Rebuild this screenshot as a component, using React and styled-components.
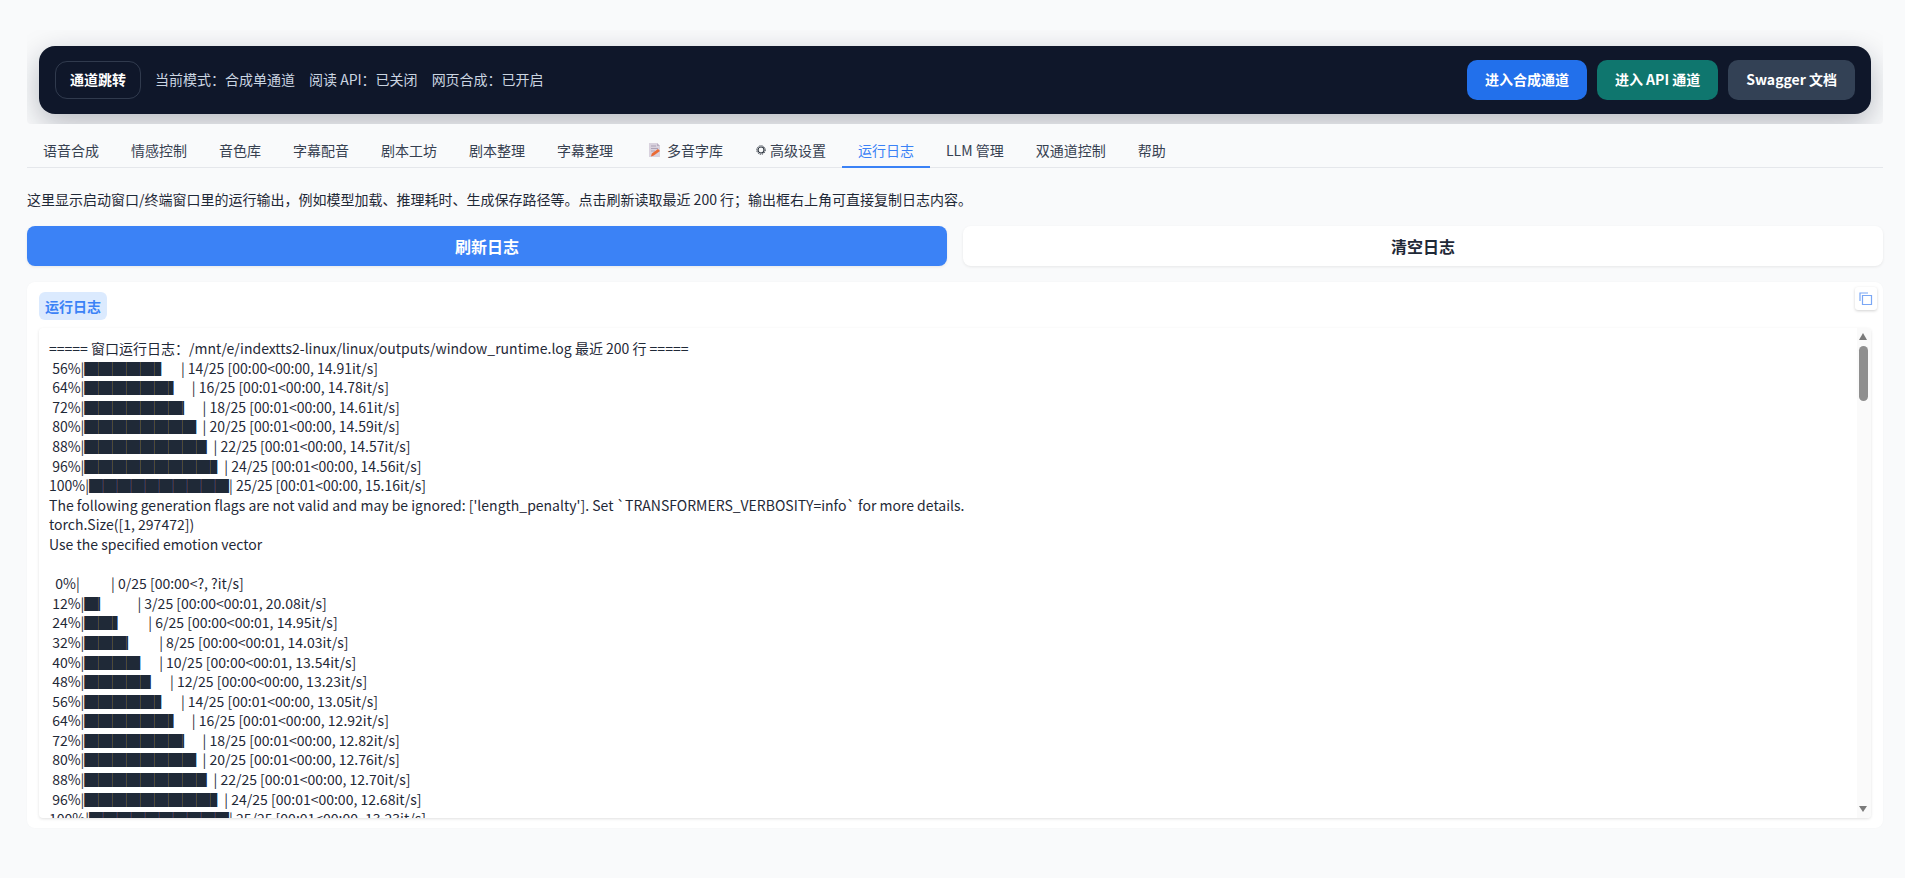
import React from 'react'
import styled, { createGlobalStyle } from 'styled-components'

const GlobalStyle = createGlobalStyle`
  html, body {
    margin: 0;
    height: 100%;
    background: #f9fafb;
    font-family: "Noto Sans CJK SC", "Noto Sans", sans-serif;
    color: #1f2937;
    overflow: hidden;
  }
  * {
    box-sizing: border-box;
  }
`

const Page = styled.div`
  padding: 30px 22px 0 27px;
`

const Band = styled.div`
  padding: 16px 12px 10px;
  overflow: hidden;
  border-radius: 4px;
`

const TopBar = styled.div`
  height: 68px;
  padding: 0 16px;
  display: flex;
  align-items: center;
  background: #0f172a;
  border-radius: 16px;
  box-shadow: 0 10px 30px rgba(15, 23, 42, 0.28);
`

const Badge = styled.div`
  height: 38px;
  width: 86px;
  padding-bottom: 2px;
  display: flex;
  align-items: center;
  justify-content: center;
  border: 1px solid rgba(148, 163, 184, 0.25);
  border-radius: 12px;
  color: #fff;
  font-size: 14px;
  font-weight: 700;
`

const Status = styled.div`
  margin-left: 14px;
  padding-bottom: 2px;
  display: flex;
  gap: 14px;
  color: #cbd5e1;
  font-size: 14px;
  flex: 1;
`

const LinkRow = styled.div`
  display: flex;
  gap: 10px;
`

const LinkBtn = styled.a`
  height: 40px;
  padding: 0 18px 2px;
  display: flex;
  align-items: center;
  border-radius: 10px;
  background: ${p => p.$bg};
  color: #fff;
  font-size: 14px;
  font-weight: 700;
  white-space: pre;
`

const TabBar = styled.div`
  margin-top: 9px;
  display: flex;
  border-bottom: 1px solid #e5e7eb;
`

const Tab = styled.div`
  height: 35px;
  margin-bottom: -1px;
  padding: 0 16px;
  display: flex;
  align-items: center;
  gap: ${p => p.$gap || 0}px;
  font-size: 14px;
  white-space: pre;
  color: ${p => (p.$active ? '#3b82f6' : '#374151')};
  border-bottom: 2px solid ${p => (p.$active ? '#3b82f6' : 'transparent')};
`

const Intro = styled.p`
  margin: 21px 0 0;
  font-size: 14px;
  line-height: 20px;
  color: #1f2937;
`

const ActionRow = styled.div`
  margin-top: 17px;
  display: grid;
  grid-template-columns: 1fr 1fr;
  gap: 16px;
`

const ActionBtn = styled.button`
  height: 40px;
  border: none;
  border-radius: 8px;
  font-family: inherit;
  font-size: 16px;
  font-weight: 700;
  background: ${p => (p.$primary ? '#3b82f6' : '#fff')};
  color: ${p => (p.$primary ? '#fff' : '#1f2937')};
  box-shadow: 0 1px 3px rgba(0, 0, 0, 0.08);
`

const LogPanel = styled.section`
  position: relative;
  margin-top: 16px;
  height: 546px;
  padding: 10px 12px;
  background: #fff;
  border-radius: 8px;
  box-shadow: 0 0 2px rgba(0, 0, 0, 0.03);
`

const PanelLabel = styled.div`
  width: 68px;
  height: 28px;
  display: flex;
  align-items: center;
  justify-content: center;
  background: #dbeafe;
  border-radius: 6px;
  color: #3b82f6;
  font-size: 14px;
  font-weight: 700;
`

const CopyBtn = styled.button`
  position: absolute;
  top: 5px;
  right: 6px;
  width: 22px;
  height: 23px;
  padding: 0;
  display: flex;
  align-items: center;
  justify-content: center;
  border: none;
  border-radius: 3px;
  background: #fff;
  box-shadow: 0 1px 3px rgba(0, 0, 0, 0.18);
`

const LogFrame = styled.div`
  position: relative;
  margin-top: 8px;
  height: 490px;
  overflow: hidden;
  background: #fff;
  border-radius: 4px;
  box-shadow: 0 1px 3px rgba(0, 0, 0, 0.12);
`

const LogText = styled.div`
  height: 100%;
  padding: 11px 10px 0;
  overflow: hidden;
  font-size: 14px;
  line-height: 19.6px;
  color: #1f2937;
  white-space: pre;
`

const ScrollRail = styled.div`
  position: absolute;
  top: 0;
  right: 0;
  bottom: 0;
  width: 14px;
  background: #fafafa;
`

const ScrollThumb = styled.div`
  position: absolute;
  top: 18px;
  left: 2px;
  width: 9px;
  height: 55px;
  background: #8f8f8f;
  border-radius: 5px;
`

const ScrollArrow = styled.div`
  position: absolute;
  left: 2px;
  width: 0;
  height: 0;
  border-left: 4.5px solid transparent;
  border-right: 4.5px solid transparent;
  ${p => (p.$down
    ? 'bottom: 6px; border-top: 6px solid #7a7a7a;'
    : 'top: 5px; border-bottom: 7px solid #7a7a7a;')}
`

const tabs = ['语音合成', '情感控制', '音色库', '字幕配音', '剧本工坊', '剧本整理', '字幕整理', 'memo', 'gear', '运行日志', 'LLM 管理', '双通道控制', '帮助']

const MemoIcon = () => (
  <svg width="19" height="16" viewBox="0 0 19 16">
    <path d="M4 1h8l3 3v11H4z" fill="#d9d2de" />
    <path d="M12 1v3h3z" fill="#b9aec2" />
    <path d="M6 4h5M6 6.500h7M6 9h4" stroke="#ada2b6" strokeWidth="1" />
    <path d="M6 14.500l.8-3L13 7l2 2-6.200 4.500z" fill="#ea6a35" />
  </svg>
)

const GearIcon = () => (
  <svg width="12" height="12" viewBox="0 0 12 12" fill="none" stroke="#2f3640">
    <circle cx="6" cy="6" r="3" strokeWidth="1.200" />
    <circle cx="6" cy="6" r="4.300" strokeWidth="1" strokeDasharray="1.200 1.050" />
  </svg>
)

const bar = (pct, label, rate) => `${pct}|${label}| ${rate}`

const firstRun = [
  bar(' 56%', '█████▌    ', '14/25 [00:00<00:00, 14.91it/s]'),
  bar(' 64%', '██████▍   ', '16/25 [00:01<00:00, 14.78it/s]'),
  bar(' 72%', '███████▏  ', '18/25 [00:01<00:00, 14.61it/s]'),
  bar(' 80%', '████████  ', '20/25 [00:01<00:00, 14.59it/s]'),
  bar(' 88%', '████████▊ ', '22/25 [00:01<00:00, 14.57it/s]'),
  bar(' 96%', '█████████▌', '24/25 [00:01<00:00, 14.56it/s]'),
  bar('100%', '██████████', '25/25 [00:01<00:00, 15.16it/s]'),
]

const notes = [
  "The following generation flags are not valid and may be ignored: ['length_penalty']. Set `TRANSFORMERS_VERBOSITY=info` for more details.",
  'torch.Size([1, 297472])',
  'Use the specified emotion vector',
  '',
]

const secondRun = [
  bar('  0%', '          ', '0/25 [00:00<?, ?it/s]'),
  bar(' 12%', '█▏        ', '3/25 [00:00<00:01, 20.08it/s]'),
  bar(' 24%', '██▍       ', '6/25 [00:00<00:01, 14.95it/s]'),
  bar(' 32%', '███▏      ', '8/25 [00:00<00:01, 14.03it/s]'),
  bar(' 40%', '████      ', '10/25 [00:00<00:01, 13.54it/s]'),
  bar(' 48%', '████▊     ', '12/25 [00:00<00:00, 13.23it/s]'),
  bar(' 56%', '█████▌    ', '14/25 [00:01<00:00, 13.05it/s]'),
  bar(' 64%', '██████▍   ', '16/25 [00:01<00:00, 12.92it/s]'),
  bar(' 72%', '███████▏  ', '18/25 [00:01<00:00, 12.82it/s]'),
  bar(' 80%', '████████  ', '20/25 [00:01<00:00, 12.76it/s]'),
  bar(' 88%', '████████▊ ', '22/25 [00:01<00:00, 12.70it/s]'),
  bar(' 96%', '█████████▌', '24/25 [00:01<00:00, 12.68it/s]'),
  bar('100%', '██████████', '25/25 [00:01<00:00, 13.23it/s]'),
]

const logLines = ['===== 窗口运行日志：/mnt/e/indextts2-linux/linux/outputs/window_runtime.log 最近 200 行 =====', ...firstRun, ...notes, ...secondRun]

const App = () => (
  <Page>
    <GlobalStyle />
    <Band>
      <TopBar>
        <Badge>通道跳转</Badge>
        <Status>
          <span>当前模式：合成单通道</span>
          <span>阅读 API：已关闭</span>
          <span>网页合成：已开启</span>
        </Status>
        <LinkRow>
          <LinkBtn $bg="#2270eb">进入合成通道</LinkBtn>
          <LinkBtn $bg="#0f766e">进入 API 通道</LinkBtn>
          <LinkBtn $bg="#334155">Swagger 文档</LinkBtn>
        </LinkRow>
      </TopBar>
    </Band>
    <TabBar>
      {tabs.map(name => {
        if (name === 'memo') return <Tab key={name} $gap={3}><MemoIcon />多音字库</Tab>
        if (name === 'gear') return <Tab key={name} $gap={3}><GearIcon />高级设置</Tab>
        return <Tab key={name} $active={name === '运行日志'}>{name}</Tab>
      })}
    </TabBar>
    <Intro>这里显示启动窗口/终端窗口里的运行输出，例如模型加载、推理耗时、生成保存路径等。点击刷新读取最近 200 行；输出框右上角可直接复制日志内容。</Intro>
    <ActionRow>
      <ActionBtn $primary>刷新日志</ActionBtn>
      <ActionBtn>清空日志</ActionBtn>
    </ActionRow>
    <LogPanel>
      <PanelLabel>运行日志</PanelLabel>
      <CopyBtn aria-label="copy">
        <svg width="14" height="14" viewBox="0 0 14 14" fill="none" stroke="#7aa7f5" strokeWidth="1.2">
          <path d="M1 9V1h8" />
          <path d="M3.500 3.500h9v9h-9z" />
        </svg>
      </CopyBtn>
      <LogFrame>
        <LogText>{logLines.join('\n')}</LogText>
        <ScrollRail>
          <ScrollArrow />
          <ScrollThumb />
          <ScrollArrow $down />
        </ScrollRail>
      </LogFrame>
    </LogPanel>
  </Page>
)

export default App
